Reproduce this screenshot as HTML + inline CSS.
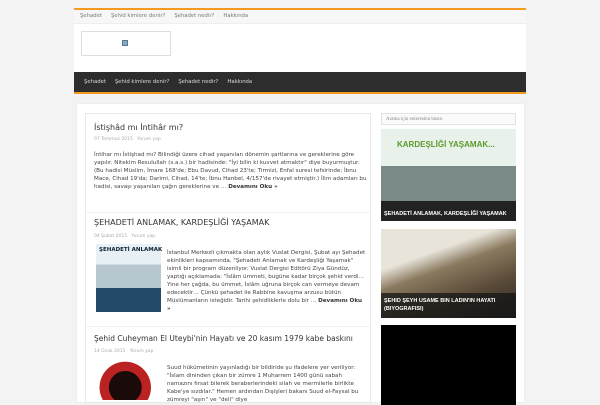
<!DOCTYPE html>
<html><head><meta charset="utf-8"><style>
*{margin:0;padding:0;box-sizing:border-box}
body{width:600px;height:400px;overflow:hidden;background:#f3f3f3;font-family:"DejaVu Sans","Liberation Sans",sans-serif;position:relative}
.a{position:absolute}
.t{font-size:5.6px;color:#444;line-height:8px}
.nav span{margin-right:9px}
.ttl{font-size:8px;color:#333;white-space:nowrap;font-family:"DejaVu Sans",sans-serif}
.dt{font-size:4.5px;color:#aaa}
.more{font-weight:bold;color:#333}
</style></head><body>
<div class="a" style="left:74px;top:8px;width:452px;height:2px;background:#f39a1e"></div>
<div class="a" style="left:74px;top:10px;width:452px;height:14px;background:#f7f7f7;border-bottom:1px solid #eee"></div>
<div class="a nav" style="left:80px;top:13px;font-size:5.3px;color:#777"><span>Şehadet</span><span>Şehid kimlere denir?</span><span>Şehadet nedir?</span><span>Hakkında</span></div>
<div class="a" style="left:74px;top:24px;width:452px;height:48px;background:#fff"></div>
<div class="a" style="left:81px;top:31px;width:90px;height:25px;border:1px solid #ddd;background:#fff"></div>
<div class="a" style="left:122px;top:40px;width:6px;height:6px;background:#8ab;border:1px solid #579"></div>
<div class="a" style="left:74px;top:72px;width:452px;height:20px;background:#2d2d2d"></div>
<div class="a" style="left:74px;top:92px;width:452px;height:2px;background:#f39a1e"></div>
<div class="a nav" style="left:84px;top:79px;font-size:5.3px;color:#ddd"><span>Şehadet</span><span>Şehid kimlere denir?</span><span>Şehadet nedir?</span><span>Hakkında</span></div>
<div class="a" style="left:76px;top:103px;width:449px;height:300px;background:#fff;border:1px solid #eee"></div>
<div class="a" style="left:85px;top:113px;width:286px;height:290px;background:#fff;border:1px solid #e8e8e8"></div>
<div class="a" style="left:86px;top:212px;width:284px;height:1px;background:#f2f2f2"></div>
<div class="a" style="left:86px;top:326px;width:284px;height:1px;background:#f2f2f2"></div>

<div class="a ttl" style="left:94px;top:123px">İstişhâd mı İntihâr mı?</div>
<div class="a dt" style="left:94px;top:137px">07 Temmuz 2015 &nbsp; Yorum yap</div>
<div class="a t" style="left:94px;top:151px;width:274px">İntihar mı İstişhad mı? Bilindiği üzere cihad yaşanılan dönemin şartlarına ve gereklerine göre yapılır. Nitekim Resulullah (s.a.s.) bir hadisinde: "İyi bilin ki kuvvet atmaktır" diye buyurmuştur. (Bu hadisi Müslim, İmare 168'de; Ebu Davud, Cihad 23'te; Tirmizi, Enfal suresi tefsirinde; İbnu Mace, Cihad 19'da; Darimi, Cihad, 14'te; İbnu Hanbel, 4/157'de rivayet etmiştir.) İlim adamları bu hadisi, savaşı yaşanılan çağın gereklerine ve … <span class="more">Devamını Oku »</span></div>

<div class="a ttl" style="left:94px;top:218px;font-size:8px">ŞEHADETİ ANLAMAK, KARDEŞLİĞİ YAŞAMAK</div>
<div class="a dt" style="left:94px;top:234px">04 Şubat 2015 &nbsp; Yorum yap</div>
<div class="a" style="left:96px;top:244px;width:65px;height:68px;background:linear-gradient(#e6f0f5 0 30%,#b8c8d0 30% 65%,#244a6a 65%)"></div>
<div class="a" style="left:99px;top:247px;font-size:5.5px;font-weight:bold;color:#123">ŞEHADETİ ANLAMAK</div>
<div class="a t" style="left:167px;top:249px;width:200px">İstanbul Merkezli çıkmakta olan aylık Vuslat Dergisi, Şubat ayı Şehadet ekinlikleri kapsamında, "Şehadeti Anlamak ve Kardeşliği Yaşamak" isimli bir program düzenliyor. Vuslat Dergisi Editörü Ziya Gündüz, yaptığı açıklamada: "İslâm ümmeti, bugüne kadar birçok şehid verdi… Yine her çağda, bu ümmet, İslâm uğruna birçok can vermeye devam edecektir… Çünkü şehadet ile Rabbine kavuşma arzusu bütün Müslümanların isteğidir. Tarihi şehidliklerle dolu bir … <span class="more">Devamını Oku »</span></div>

<div class="a ttl" style="left:94px;top:334px;font-size:7.5px">Şehid Cuheyman El Uteybi'nin Hayatı ve 20 kasım 1979 kabe baskını</div>
<div class="a dt" style="left:94px;top:349px">14 Ocak 2015 &nbsp; Yorum yap</div>
<div class="a" style="left:96px;top:358px;width:65px;height:42px;background:radial-gradient(circle at 45% 70%,#1a0a0a 0 35%,#b22 36% 55%,#fff 56%)"></div>
<div class="a t" style="left:167px;top:364px;width:200px">Suud hükümetinin yayınladığı bir bildiride şu ifadelere yer veriliyor: "İslam dininden çıkan bir zümre 1 Muharrem 1400 günü sabah namazını fırsat bilerek beraberlerindeki silah ve mermilerle birlikte Kabe'ye sızdılar." Hemen ardından Dışişleri bakanı Suud el-Faysal bu zümreyi "aşırı" ve "deli" diye</div>

<div class="a" style="left:381px;top:113px;width:135px;height:12px;border:1px solid #e2e2e2;background:#fafafa;font-size:5px;color:#888;padding:3px 4px;font-family:'Liberation Serif',serif">Arama için enteresinu basın</div>
<div class="a" style="left:381px;top:129px;width:135px;height:92px;background:linear-gradient(#e9f2ea 0 40%,#7a8a88 40% 78%,#222 78%)"></div>
<div class="a" style="left:397px;top:140px;font-size:8px;font-weight:bold;color:#5a9a2a;font-family:'Liberation Sans',sans-serif">KARDEŞLİĞİ YAŞAMAK...</div>
<div class="a" style="left:384px;top:211px;font-size:5.5px;color:#fff;font-weight:bold;font-family:'Liberation Sans',sans-serif">ŞEHADETİ ANLAMAK, KARDEŞLİĞİ YAŞAMAK</div>
<div class="a" style="left:381px;top:229px;width:135px;height:89px;background:linear-gradient(160deg,#e8e4da 0 30%,#8a7a60 45%,#5a4a38 70%,#2a2a2a)"></div>
<div class="a" style="left:381px;top:293px;width:135px;height:25px;background:rgba(20,20,20,.75)"></div>
<div class="a" style="left:384px;top:297px;font-size:5.5px;color:#fff;font-weight:bold;line-height:8px;font-family:'Liberation Sans',sans-serif">ŞEHID ŞEYH USAME BIN LADIN'IN HAYATI<br>(BIYOGRAFISI)</div>
<div class="a" style="left:381px;top:325px;width:135px;height:80px;background:#000"></div>
</body></html>
